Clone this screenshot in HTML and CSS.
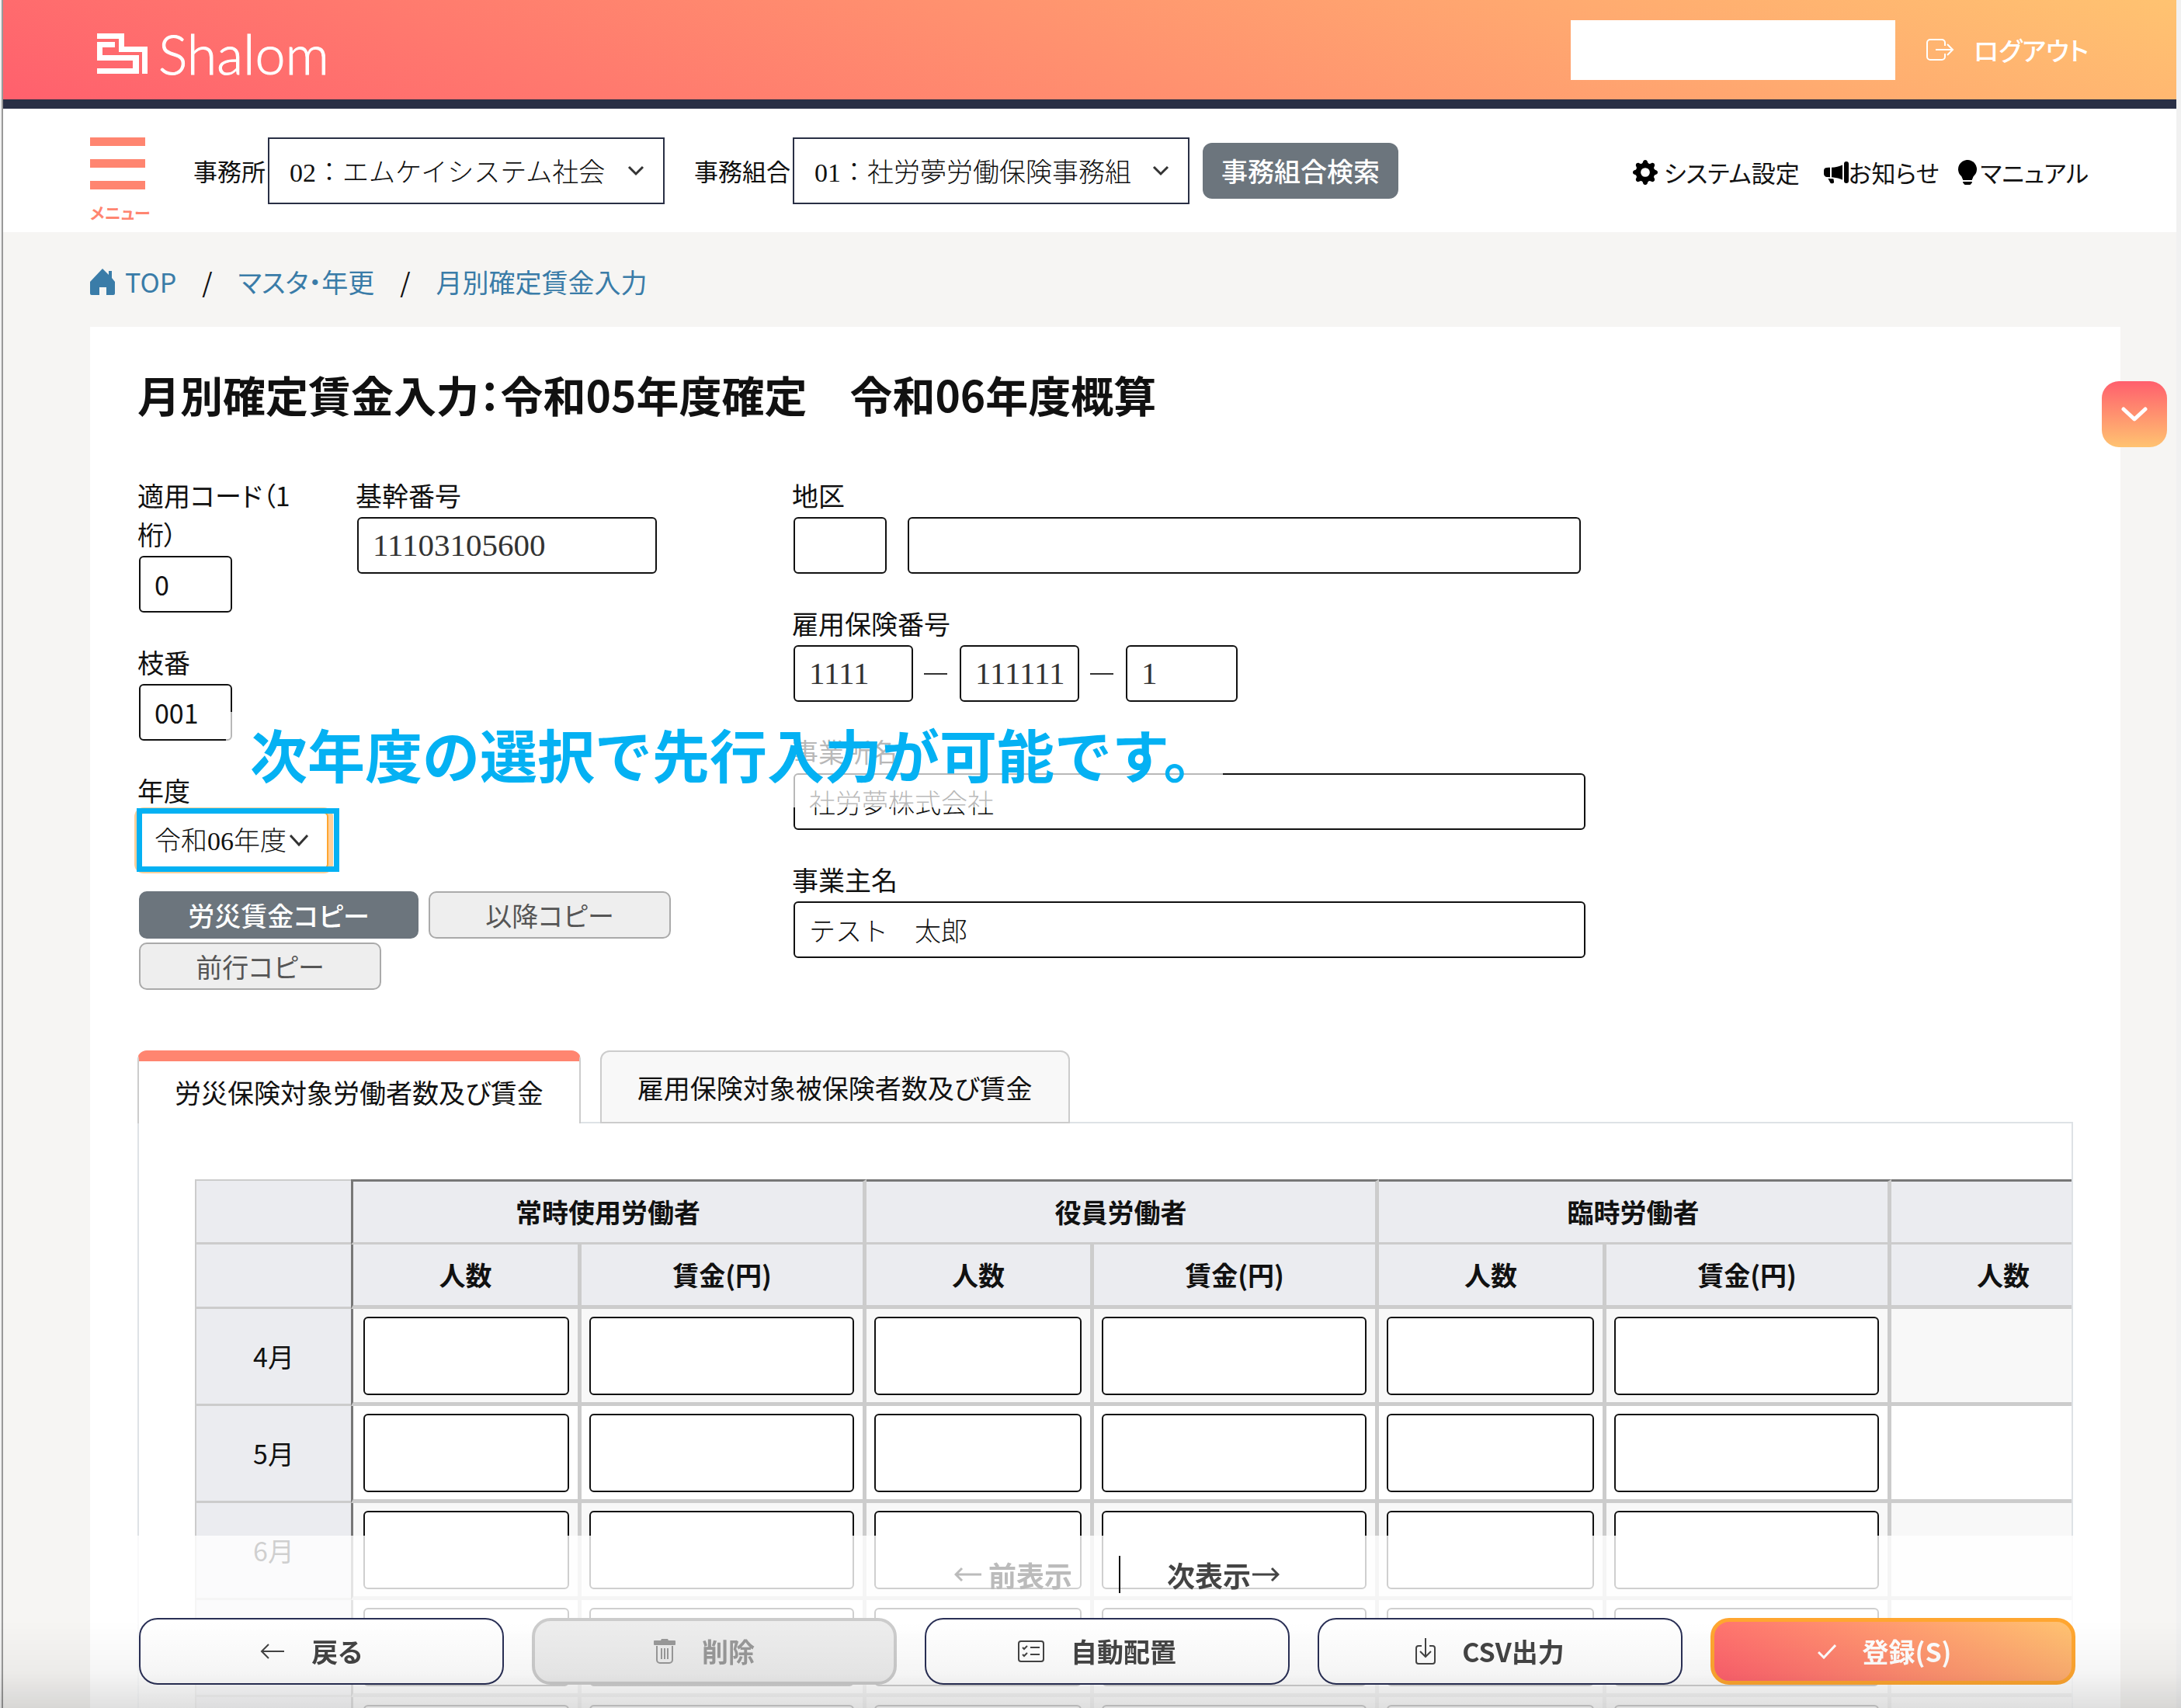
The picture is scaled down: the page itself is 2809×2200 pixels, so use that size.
FILE: index.html
```html
<!DOCTYPE html>
<html lang="ja">
<head>
<meta charset="utf-8">
<title>月別確定賃金入力 | Shalom</title>
<meta name="viewport" content="width=device-width, initial-scale=1">
<link rel="stylesheet" href="styles.css">
</head>
<body>
<div class="app">
  <header class="header">
    <a class="logo" href="#">
      <svg class="logo-mark" viewBox="0 0 65 52" aria-hidden="true"><path fill="#fff" d="M0 0H35V17H65V52H58V24H28V7H0ZM0 11H23V18H7V28H54V52H0V45H46V35H0Z"/></svg>
      <span>Shalom</span>
    </a>
    <div class="header-right">
      <div class="account"></div>
      <a class="logout" href="#">
        <svg viewBox="0 0 36 28" width="36" height="28" fill="none" stroke="#fff" stroke-width="2" aria-hidden="true"><path d="M24 9V5a4 4 0 0 0-4-4H5a4 4 0 0 0-4 4v18a4 4 0 0 0 4 4h15a4 4 0 0 0 4-4v-4M12 14h22M27 7l7 7-7 7"/></svg>
        ログアウト
      </a>
    </div>
  </header>

  <nav class="nav">
    <button class="menu" type="button"><i></i><i></i><i></i><span>メニュー</span></button>
    <div class="pick">
      <label for="office">事務所</label>
      <span class="select"><select id="office"><option>02：エムケイシステム社会</option></select>
      <svg viewBox="0 0 22 14" aria-hidden="true"><path d="M2 2l9 9 9-9"/></svg></span>
    </div>
    <div class="pick">
      <label for="union">事務組合</label>
      <span class="select"><select id="union"><option>01：社労夢労働保険事務組</option></select>
      <svg viewBox="0 0 22 14" aria-hidden="true"><path d="M2 2l9 9 9-9"/></svg></span>
    </div>
    <button class="btn-search" type="button">事務組合検索</button>
    <div class="links">
      <a href="#" class="link-gear"><svg viewBox="0 0 16 16" width="32" height="32" aria-hidden="true"><path d="M9.405 1.05c-.413-1.4-2.397-1.4-2.81 0l-.1.34a1.464 1.464 0 0 1-2.105.872l-.31-.17c-1.283-.698-2.686.705-1.987 1.987l.169.311c.446.82.023 1.841-.872 2.105l-.34.1c-1.4.413-1.4 2.397 0 2.81l.34.1a1.464 1.464 0 0 1 .872 2.105l-.17.31c-.698 1.283.705 2.686 1.987 1.987l.311-.169a1.464 1.464 0 0 1 2.105.872l.1.34c.413 1.4 2.397 1.4 2.81 0l.1-.34a1.464 1.464 0 0 1 2.105-.872l.31.17c1.283.698 2.686-.705 1.987-1.987l-.169-.311a1.464 1.464 0 0 1 .872-2.105l.34-.1c1.4-.413 1.4-2.397 0-2.81l-.34-.1a1.464 1.464 0 0 1-.872-2.105l.17-.31c.698-1.283-.705-2.686-1.987-1.987l-.311.169a1.464 1.464 0 0 1-2.105-.872zM8 10.93a2.929 2.929 0 1 1 0-5.86 2.929 2.929 0 0 1 0 5.858z"/></svg>システム設定</a>
      <a href="#"><svg viewBox="0 0 16 16" width="32" height="32" aria-hidden="true"><path d="M13 2.5a1.5 1.5 0 0 1 3 0v11a1.5 1.5 0 0 1-3 0zm-1 .724c-2.067.95-4.539 1.481-7 1.656v6.237a25 25 0 0 1 1.088.085c2.053.204 4.038.668 5.912 1.56zm-8 7.841V4.934c-.68.027-1.399.043-2.008.053A2.02 2.02 0 0 0 0 7v2c0 1.106.896 1.996 1.994 2.009l.496.008a64 64 0 0 1 1.51.048m1.39 1.081q.428.032.85.078l.253 1.69a1 1 0 0 1-.983 1.187h-.548a1 1 0 0 1-.916-.599l-1.314-2.48a66 66 0 0 1 1.692.064q.491.026.966.06"/></svg>お知らせ</a>
      <a href="#" class="link-bulb"><svg viewBox="2 0 12 16" width="26" height="32" aria-hidden="true"><path d="M2 6a6 6 0 1 1 10.174 4.31c-.203.196-.359.4-.453.619l-.762 1.769A.5.5 0 0 1 10.5 13h-5a.5.5 0 0 1-.46-.302l-.761-1.77a2 2 0 0 0-.453-.618A5.98 5.98 0 0 1 2 6m3 8.500a.5.5 0 0 1 .5-.5h5a.5.5 0 0 1 0 1l-.224.447a1 1 0 0 1-.894.553H6.618a1 1 0 0 1-.894-.553L5.500 15a.5.5 0 0 1-.5-.5"/></svg>マニュアル</a>
    </div>
  </nav>

  <nav class="crumbs" aria-label="パンくず">
    <a href="#"><svg viewBox="0 0 32 34" width="32" height="34" aria-hidden="true"><path fill="currentColor" d="M16 0l8 8V3h4v9l4 5v15q0 2-2 2h-9V24h-9v10H2q-2 0-2-2V17z"/></svg>TOP</a>
    <span>/</span>
    <a href="#">マスタ・年更</a>
    <span>/</span>
    <a href="#">月別確定賃金入力</a>
  </nav>

  <main class="card">
    <h1>月別確定賃金入力：令和05年度確定　令和06年度概算</h1>

    <form class="form">
      <div class="col-left">
        <div class="pair">
          <div class="field code"><label for="code">適用コード（1桁）</label><input id="code" class="w-s sans" value="0"></div>
          <div class="field"><label for="base">基幹番号</label><input id="base" class="w-base num" value="11103105600"></div>
        </div>
        <div class="field"><label for="branch">枝番</label><input id="branch" class="w-s sans" value="001"></div>
        <div class="field"><label for="year">年度</label>
          <span class="year"><select id="year"><option>令和06年度</option></select>
          <svg viewBox="0 0 26 17" aria-hidden="true"><path d="M2 2l11 12L24 2"/></svg></span>
        </div>
        <div class="copies">
          <button type="button" class="copy dark">労災賃金コピー</button>
          <button type="button" class="copy" disabled>以降コピー</button>
          <button type="button" class="copy" disabled>前行コピー</button>
        </div>
      </div>
      <div class="col-right">
        <div class="field"><label for="area">地区</label>
          <div class="row area"><input id="area" class="w-s"><input class="grow" aria-label="地区名"></div></div>
        <div class="field"><label for="ins1">雇用保険番号</label>
          <div class="row"><input id="ins1" class="w-m num" value="1111"><i class="dash"></i><input class="w-m num" aria-label="雇用保険番号2" value="111111"><i class="dash"></i><input class="w-c num" aria-label="雇用保険番号3" value="1"></div></div>
        <div class="field"><label for="company">事業所名</label><input id="company" value="社労夢株式会社"></div>
        <div class="field"><label for="owner">事業主名</label><input id="owner" value="テスト　太郎"></div>
      </div>
      <p class="callout">次年度の選択で先行入力が可能です。</p>
    </form>

    <div class="tabs" role="tablist">
      <button type="button" class="tab active" role="tab" aria-selected="true">労災保険対象労働者数及び賃金</button>
      <button type="button" class="tab" role="tab" aria-selected="false">雇用保険対象被保険者数及び賃金</button>
    </div>
    <section class="panel">
      <table>
        <colgroup><col class="c-month"><col class="c-first"><col class="c-wage"><col class="c-count"><col class="c-wage"><col class="c-count"><col class="c-wage"><col class="c-count"><col class="c-wage"></colgroup>
        <thead>
          <tr><th class="month"></th><th colspan="2" class="first">常時使用労働者</th><th colspan="2">役員労働者</th><th colspan="2">臨時労働者</th><th colspan="2"></th></tr>
          <tr><th class="month"></th><th class="first">人数</th><th>賃金(円)</th><th>人数</th><th>賃金(円)</th><th>人数</th><th>賃金(円)</th><th>人数</th><th></th></tr>
        </thead>
        <tbody>
          <tr><th class="month">4月</th><td class="first"><input aria-label="4月 常時 人数"></td><td><input aria-label="4月 常時 賃金"></td><td><input aria-label="4月 役員 人数"></td><td><input aria-label="4月 役員 賃金"></td><td><input aria-label="4月 臨時 人数"></td><td><input aria-label="4月 臨時 賃金"></td><td></td><td></td></tr>
          <tr><th class="month">5月</th><td class="first"><input aria-label="5月 常時 人数"></td><td><input aria-label="5月 常時 賃金"></td><td><input aria-label="5月 役員 人数"></td><td><input aria-label="5月 役員 賃金"></td><td><input aria-label="5月 臨時 人数"></td><td><input aria-label="5月 臨時 賃金"></td><td></td><td></td></tr>
          <tr><th class="month">6月</th><td class="first"><input aria-label="6月 常時 人数"></td><td><input aria-label="6月 常時 賃金"></td><td><input aria-label="6月 役員 人数"></td><td><input aria-label="6月 役員 賃金"></td><td><input aria-label="6月 臨時 人数"></td><td><input aria-label="6月 臨時 賃金"></td><td></td><td></td></tr>
          <tr><th class="month"></th><td class="first"><input aria-label="7月 常時 人数"></td><td><input aria-label="7月 常時 賃金"></td><td><input aria-label="7月 役員 人数"></td><td><input aria-label="7月 役員 賃金"></td><td><input aria-label="7月 臨時 人数"></td><td><input aria-label="7月 臨時 賃金"></td><td></td><td></td></tr>
          <tr><th class="month"></th><td class="first"><input aria-label="8月 常時 人数"></td><td><input aria-label="8月 常時 賃金"></td><td><input aria-label="8月 役員 人数"></td><td><input aria-label="8月 役員 賃金"></td><td><input aria-label="8月 臨時 人数"></td><td><input aria-label="8月 臨時 賃金"></td><td></td><td></td></tr>
        </tbody>
      </table>
    </section>
  </main>
</div>

<button class="jump" type="button" aria-label="下へ"><svg viewBox="0 0 34 20" width="34" height="20" aria-hidden="true"><path d="M3 3l14 13L31 3"/></svg></button>

<footer class="footer">
  <div class="pager">
    <button type="button" disabled><svg viewBox="0 0 36 20" width="36" height="20" aria-hidden="true"><path d="M35 10H2M10 2l-8 8 8 8"/></svg>前表示</button>
    <i></i>
    <button type="button">次表示<svg viewBox="0 0 36 20" width="36" height="20" aria-hidden="true"><path d="M1 10h33M26 2l8 8-8 8"/></svg></button>
  </div>
  <div class="actions">
    <button type="button"><svg viewBox="0 0 32 22" width="32" height="22" aria-hidden="true"><path d="M31 11H2M11 2l-9 9 9 9"/></svg>戻る</button>
    <button type="button" class="off" disabled><svg viewBox="0 0 28 32" width="28" height="32" aria-hidden="true"><path d="M4 9v18a4 4 0 0 0 4 4h12a4 4 0 0 0 4-4V9M10 12v14M14 12v14M18 12v14"/><path fill="currentColor" stroke="none" d="M0 3q0-1 1-1h8l1-2h8l1 2h8q1 0 1 1v4q0 1-1 1H1Q0 8 0 7z"/></svg>削除</button>
    <button type="button"><svg viewBox="0 0 34 28" width="34" height="28" aria-hidden="true"><rect x="1" y="1" width="32" height="26" rx="3"/><path d="M16 9h12M16 18h12M6 9l2 2 4-4M6 18l2 2 4-4"/></svg>自動配置</button>
    <button type="button"><svg viewBox="0 0 26 34" width="26" height="34" aria-hidden="true"><path d="M8 10H4a3 3 0 0 0-3 3v17a3 3 0 0 0 3 3h18a3 3 0 0 0 3-3V13a3 3 0 0 0-3-3h-4M13 0v24M6 17l7 7 7-7"/></svg>CSV出力</button>
    <button type="submit" class="primary"><svg viewBox="0 0 24 20" width="24" height="20" aria-hidden="true"><path d="M1 11l7 7L23 2"/></svg>登録(S)</button>
  </div>
</footer>
</body>
</html>
```
FILE: styles.css
```css
* { box-sizing: border-box; }

body {
  margin: 0;
  padding-left: 2px;
  font-family: "Noto Sans CJK JP", sans-serif;
  font-size: 34px;
  line-height: 50px;
  color: #111;
  background: #f1f1f1;
  font-feature-settings: "palt";
}

button, input, select {
  font: inherit;
  color: inherit;
  margin: 0;
}

button { cursor: pointer; font-feature-settings: inherit; }
a { color: inherit; text-decoration: none; }
svg { flex: none; }

.app {
  display: flex;
  flex-direction: column;
  height: 100vh;
  overflow: hidden;
  border-left: 2px solid #999;
  border-right: 6px solid #f1f1f1;
  background: #f6f5f3;
}

/* header */
.header {
  display: flex;
  flex: none;
  align-items: center;
  justify-content: space-between;
  height: 140px;
  padding: 0 113px 0 121px;
  border-bottom: 12px solid #292f45;
  background: linear-gradient(20deg, #ff5f6d, #ffc371) border-box;
  color: #fff;
}
.logo {
  display: flex;
  align-items: center;
  gap: 14px;
  padding-top: 10px;
  font-family: Lato, sans-serif;
  font-size: 70px;
  font-weight: 300;
  line-height: 72px;
  -webkit-text-stroke: 1px #fff;
}
.logo-mark { width: 65px; height: 52px; }
.header-right { display: flex; align-items: center; gap: 40px; }
.account { width: 418px; height: 77px; background: #fff; }
.logout { display: flex; align-items: center; gap: 25px; font-weight: 500; font-size: 33px; }

/* navigation bar */
.nav {
  display: flex;
  flex: none;
  align-items: flex-start;
  height: 159px;
  padding: 37px 113px 0 112px;
  background: #fff;
  font-size: 31px;
}
.menu {
  display: flex;
  flex-direction: column;
  gap: 17px;
  width: 80px;
  margin-right: 53px;
  padding: 0;
  border: 0;
  background: none;
  color: #ff8570;
  font-size: 21px;
  font-weight: 700;
  line-height: 24px;
  text-align: left;
}
.menu i { width: 71px; height: 11px; background: #ff8570; }
.pick { display: flex; align-items: center; gap: 3px; margin-right: 38px; }
.pick + .pick { margin-right: 17px; }
.select { position: relative; display: flex; width: 511px; }
.select select {
  appearance: none;
  width: 100%;
  height: 86px;
  padding: 6px 60px 0 26px;
  border: 2px solid #292f45;
  border-radius: 0;
  background: #fff;
  font-family: "Liberation Serif", "Noto Sans CJK JP", serif;
  font-size: 34px;
  font-weight: 300;
  font-feature-settings: normal;
}
.select svg {
  position: absolute;
  top: 36px;
  right: 26px;
  width: 22px;
  height: 14px;
}
.select path, .year path { fill: none; stroke: #333; stroke-width: 3; }
.btn-search {
  height: 72px;
  margin-top: 7px;
  padding: 0 24px;
  border: 0;
  border-radius: 12px;
  background: #6c757d;
  color: #fff;
  font-size: 34px;
  font-weight: 500;
}
.links { display: flex; gap: 23px; margin: 20px 0 0 auto; }
.links a { display: flex; align-items: center; }
.links .link-gear { gap: 8px; margin-right: 8px; }
.links .link-bulb { gap: 4px; }

/* breadcrumb */
.crumbs {
  display: flex;
  flex: none;
  align-items: center;
  gap: 33px;
  height: 122px;
  padding: 5px 112px 0;
}
.crumbs a { display: flex; align-items: center; gap: 13px; color: #3a7ca8; }

/* content */
.card {
  flex: 1;
  min-height: 0;
  margin: 0 72px 0 112px;
  padding: 45px 61px 0;
  background: #fff;
  overflow: hidden;
}
h1 { margin: 0 0 65px; font-size: 55px; font-weight: 700; line-height: 82px; }

.form { position: relative; display: flex; }
.col-left { width: 843px; display: flex; flex-direction: column; gap: 39px; }
.col-right { width: 1020px; display: flex; flex-direction: column; gap: 39px; }
.pair { display: flex; }
.field { display: flex; flex-direction: column; align-items: flex-start; gap: 3px; }
.field.code { width: 281px; padding-right: 72px; }
.field input {
  width: 100%;
  height: 73px;
  margin-left: 2px;
  padding: 0 18px 1px;
  border: 2px solid #111;
  border-radius: 6px;
  background: #fff;
  font-size: 34px;
  font-weight: 300;
  font-feature-settings: normal;
}
.field .num { font-family: "Liberation Serif", serif; font-size: 41px; color: #333; }
.field .sans { font-weight: 400; }
.field .w-s { width: 120px; }
.field .w-m { width: 154px; }
.field .w-c { width: 144px; }
.field .w-base { width: 386px; }
.row { display: flex; align-items: center; width: 100%; }
.row input { flex: none; }
.row.area { gap: 25px; }
.row .grow { flex: 1; margin-right: 4px; }
.dash { width: 30px; height: 2px; margin: 0 14px; background: #333; }

.year {
  position: relative;
  display: flex;
  width: 250px;
  height: 73px;
  margin-left: 2px;
}
.year select {
  appearance: none;
  width: 244px;
  padding: 2px 0 0 18px;
  border: 2px solid #ffa630;
  border-radius: 6px;
  background: #fff;
  box-shadow: 0 0 0 6px #ffd09a;
  font-family: "Liberation Serif", "Noto Sans CJK JP", serif;
  font-weight: 300;
  font-feature-settings: normal;
}
.year svg { position: absolute; top: 28px; left: 193px; width: 26px; height: 17px; }
.year::after {
  content: "";
  position: absolute;
  inset: -5px -8px -4px -3px;
  border: 7px solid #04b1f3;
}

.copies { display: flex; flex-wrap: wrap; gap: 5px 13px; margin: -10px 100px 0 2px; }
.copy {
  width: 312px;
  height: 61px;
  padding: 0;
  border: 2px solid #aaa;
  border-radius: 10px;
  background: #eee;
  color: #555;
}
.copy.dark { width: 360px; border-color: #6c757d; background: #6c757d; color: #fff; font-weight: 500; }

.callout {
  position: absolute;
  top: 304px;
  left: 114px;
  margin: 0;
  padding: 0 2px 17px 31px;
  background: rgba(255, 255, 255, .7);
  color: #04b1f3;
  font-size: 74px;
  font-weight: 700;
  line-height: 106px;
  white-space: nowrap;
  font-feature-settings: normal;
}

/* tabs and table */
.tabs { display: flex; gap: 25px; margin-top: 78px; }
.tab {
  height: 94px;
  padding: 2px 46px 0;
  border: 2px solid #ccc;
  border-radius: 12px 12px 0 0;
  background: #f8f8f8;
}
.tab.active {
  padding-top: 0;
  border-top: 14px solid #ff8570;
  border-bottom: 0;
  background: #fff;
}
.panel {
  margin-top: -2px;
  padding: 72px 0 0 72px;
  border: 2px solid #dee2e6;
  overflow: hidden;
}
table { width: 2845px; table-layout: fixed; border-collapse: separate; border-spacing: 0; }
.c-month { width: 201px; }
.c-first { width: 297px; }
.c-count { width: 293px; }
.c-wage { width: 367px; }
th, td { padding: 0; border: 0 solid #ccc; border-right-width: 5px; }
thead th { height: 83px; background: #ebecf0; border-bottom-width: 5px; }
thead tr:first-child th { height: 84px; border-bottom-width: 3px; border-top: 3px solid #777; }
.first { border-left: 3px solid #777; }
tbody td { height: 125px; padding: 5px 11px 5px 10px; border-bottom-width: 5px; }
tbody td.first { padding-left: 13px; }
tbody tr:nth-child(odd) td { background: #f8f8f8; }
.month, thead th.month, thead tr:first-child th.month {
  border-width: 0 0 3px 2px;
  background: #ebecf0;
  font-weight: 400;
}
thead tr:first-child th.month { border-top: 2px solid #ccc; }
td input {
  display: block;
  width: 100%;
  height: 101px;
  border: 2px solid #111;
  border-radius: 6px;
  background: #fff;
}

/* floating controls */
.jump {
  position: fixed;
  top: 491px;
  right: 18px;
  display: grid;
  place-items: center;
  width: 84px;
  height: 85px;
  padding: 0;
  border: 0;
  border-radius: 22px;
  background: linear-gradient(#ff5f6d, #ffc371);
}
.jump path { fill: none; stroke: #fff; stroke-width: 5; stroke-linecap: round; stroke-linejoin: round; }

.footer {
  position: fixed;
  bottom: 0;
  left: 0;
  right: 0;
  height: 222px;
  padding: 0 136px 0 179px;
}
.footer::before {
  content: "";
  position: absolute;
  inset: 0 138px 0 176px;
  z-index: -1;
  background: rgba(255, 255, 255, .8);
}
.footer::after {
  content: "";
  position: absolute;
  inset: 110px 0 0;
  pointer-events: none;
  background: linear-gradient(transparent, rgba(0, 0, 0, .04) 60%, rgba(0, 0, 0, .12));
}
.pager { display: flex; align-items: center; justify-content: center; height: 106px; padding: 0 0 6px 25px; }
.pager i { width: 2px; height: 48px; margin: 0 60px; background: #111; }
.pager button {
  display: flex;
  align-items: center;
  gap: 8px;
  padding: 0;
  border: 0;
  background: none;
  color: #444;
  font-size: 36px;
  font-weight: 700;
}
.pager button + i + button { gap: 1px; }
.pager button:disabled { color: #bbb; }
.pager path, .actions svg { fill: none; stroke: currentColor; stroke-width: 3; }
.actions { display: grid; grid-template-columns: repeat(5, 1fr); gap: 36px; }
.actions svg { stroke-width: 2; }
.actions button {
  display: flex;
  align-items: center;
  justify-content: center;
  gap: 34px;
  height: 86px;
  padding: 0 26px 0 0;
  border: 2px solid #292f55;
  border-radius: 24px;
  background: #fff;
  color: #444;
  font-weight: 700;
}
.actions .off { border: 4px solid #ccc; background: #ededed; color: #999; }
.actions .primary {
  padding-right: 22px;
  border: 5px solid #ffa630;
  background: linear-gradient(30deg, #ff5f6d, #ffc371);
  color: #fff;
}
.actions .primary svg { stroke-width: 3; }
```
